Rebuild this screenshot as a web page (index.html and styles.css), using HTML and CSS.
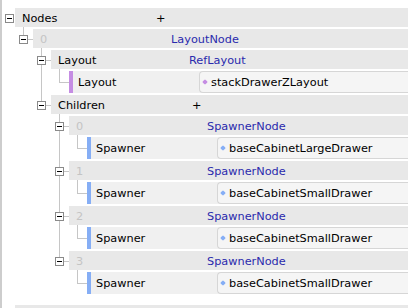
FILE: index.html
```html
<!DOCTYPE html>
<html lang="en">
<head>
    <meta charset="UTF-8">
    <title>Nodes</title>
    <link rel="stylesheet" href="styles.css">
</head>
<body>
    <div class="tree">
        <div class="node root">
            <div class="head">
                <div class="gutter"><span class="toggle"></span></div>
                <div class="row">
                    <span class="label">Nodes</span>
                    <span class="add">+</span>
                </div>
            </div>
            <div class="kids">
                <div class="node last">
                    <div class="head">
                        <div class="gutter"><span class="toggle"></span></div>
                        <div class="row">
                            <span class="label index">0</span>
                            <span class="type">LayoutNode</span>
                        </div>
                    </div>
                    <div class="kids">
                        <div class="node">
                            <div class="head">
                                <div class="gutter"><span class="toggle"></span></div>
                                <div class="row">
                                    <span class="label">Layout</span>
                                    <span class="type">RefLayout</span>
                                </div>
                            </div>
                            <div class="kids">
                                <div class="node leaf last">
                                    <div class="gutter"></div>
                                    <div class="leaf-row">
                                        <span class="bar purple"></span>
                                        <span class="leaf-label">Layout</span>
                                        <span class="value purple">stackDrawerZLayout</span>
                                    </div>
                                </div>
                            </div>
                        </div>
                        <div class="node last">
                            <div class="head">
                                <div class="gutter"><span class="toggle"></span></div>
                                <div class="row">
                                    <span class="label">Children</span>
                                    <span class="add">+</span>
                                </div>
                            </div>
                            <div class="kids">
                                <div class="node">
                                    <div class="head">
                                        <div class="gutter"><span class="toggle"></span></div>
                                        <div class="row">
                                            <span class="label index">0</span>
                                            <span class="type">SpawnerNode</span>
                                        </div>
                                    </div>
                                    <div class="kids">
                                        <div class="node leaf last">
                                            <div class="gutter"></div>
                                            <div class="leaf-row">
                                                <span class="bar blue"></span>
                                                <span class="leaf-label">Spawner</span>
                                                <span class="value blue">baseCabinetLargeDrawer</span>
                                            </div>
                                        </div>
                                    </div>
                                </div>
                                <div class="node">
                                    <div class="head">
                                        <div class="gutter"><span class="toggle"></span></div>
                                        <div class="row">
                                            <span class="label index">1</span>
                                            <span class="type">SpawnerNode</span>
                                        </div>
                                    </div>
                                    <div class="kids">
                                        <div class="node leaf last">
                                            <div class="gutter"></div>
                                            <div class="leaf-row">
                                                <span class="bar blue"></span>
                                                <span class="leaf-label">Spawner</span>
                                                <span class="value blue">baseCabinetSmallDrawer</span>
                                            </div>
                                        </div>
                                    </div>
                                </div>
                                <div class="node">
                                    <div class="head">
                                        <div class="gutter"><span class="toggle"></span></div>
                                        <div class="row">
                                            <span class="label index">2</span>
                                            <span class="type">SpawnerNode</span>
                                        </div>
                                    </div>
                                    <div class="kids">
                                        <div class="node leaf last">
                                            <div class="gutter"></div>
                                            <div class="leaf-row">
                                                <span class="bar blue"></span>
                                                <span class="leaf-label">Spawner</span>
                                                <span class="value blue">baseCabinetSmallDrawer</span>
                                            </div>
                                        </div>
                                    </div>
                                </div>
                                <div class="node last">
                                    <div class="head">
                                        <div class="gutter"><span class="toggle"></span></div>
                                        <div class="row">
                                            <span class="label index">3</span>
                                            <span class="type">SpawnerNode</span>
                                        </div>
                                    </div>
                                    <div class="kids">
                                        <div class="node leaf last">
                                            <div class="gutter"></div>
                                            <div class="leaf-row">
                                                <span class="bar blue"></span>
                                                <span class="leaf-label">Spawner</span>
                                                <span class="value blue">baseCabinetSmallDrawer</span>
                                            </div>
                                        </div>
                                    </div>
                                </div>
                            </div>
                        </div>
                    </div>
                </div>
            </div>
        </div>
        <div class="node root">
            <div class="head">
                <div class="gutter"><span class="toggle"></span></div>
                <div class="row"></div>
            </div>
        </div>
    </div>
</body>
</html>
```

FILE: styles.css
```css
* {
    box-sizing: border-box;
}

body {
    margin: 0;
    background: #fff;
    color: #000;
    font-family: "DejaVu Sans", Verdana, sans-serif;
    font-size: 11.3px;
}

.tree {
    height: 308px;
    overflow: hidden;
    border-left: 2px solid #cdcdcd;
    padding-left: 3px;
}

/*------------tree nodes-------------------*/
.node {
    position: relative;
    padding-top: 2px;
}

.root {
    padding-top: 8px;
}

.root > .kids {
    margin-left: 14px;
    padding-bottom: 3px;
}

.kids {
    margin-left: 18px;
}

.kids > .node::before {
    content: "";
    position: absolute;
    left: 4px;
    top: 0;
    bottom: 0;
    width: 1px;
    background: #c6c6c6;
}

.kids > .node.last::before {
    bottom: auto;
    height: 8px;
}

.kids > .leaf.last::before {
    height: 14px;
}

.head {
    display: flex;
    height: 19px;
}

.gutter {
    position: relative;
    width: 14px;
    flex: none;
}

.root > .head .gutter {
    width: 10px;
}

.kids .gutter::after {
    content: "";
    position: absolute;
    left: 9px;
    top: 10px;
    width: 5px;
    height: 1px;
    background: #c6c6c6;
}

.toggle {
    position: absolute;
    left: 0;
    top: 6px;
    width: 9px;
    height: 9px;
    border: 1px solid #8a8a8a;
    background: #fff;
    z-index: 1;
}

.toggle::after {
    content: "";
    position: absolute;
    left: 1px;
    top: 3px;
    width: 5px;
    height: 1px;
    background: #000;
}

.row {
    flex: 1;
    display: flex;
    background: #e8e8e8;
    padding-top: 2px;
    line-height: 18px;
    white-space: nowrap;
}

.label {
    width: 138px;
    flex: none;
    padding-left: 7px;
}

.index {
    color: #c4c4c4;
}

.type {
    color: #2a2aad;
}

.add {
    padding-left: 3px;
}

/*------------leaf rows-------------------*/
.leaf {
    display: flex;
}

.leaf .gutter::after {
    left: 4px;
    top: 11px;
    width: 10px;
}

.leaf-row {
    flex: 1;
    display: flex;
    height: 22px;
    background: #f0f0f0;
    white-space: nowrap;
}

.bar {
    width: 4px;
    flex: none;
}

.bar.purple {
    background: #c58de3;
}

.bar.blue {
    background: #86aef5;
}

.leaf-label {
    width: 126px;
    flex: none;
    padding-left: 5px;
    padding-top: 2px;
    line-height: 20px;
}

.value {
    position: relative;
    flex: 1;
    height: 22px;
    padding-left: 11px;
    padding-top: 1px;
    line-height: 19px;
    background: #f5f5f5;
    border: 1px solid #d6d6d6;
    border-right: none;
    border-radius: 4px 0 0 4px;
}

.value::before {
    content: "";
    position: absolute;
    left: 3px;
    top: 8px;
    width: 4px;
    height: 4px;
    border-radius: 1px;
    transform: rotate(45deg);
}

.value.purple::before {
    background: #c58de3;
}

.value.blue::before {
    background: #86aef5;
}
```
